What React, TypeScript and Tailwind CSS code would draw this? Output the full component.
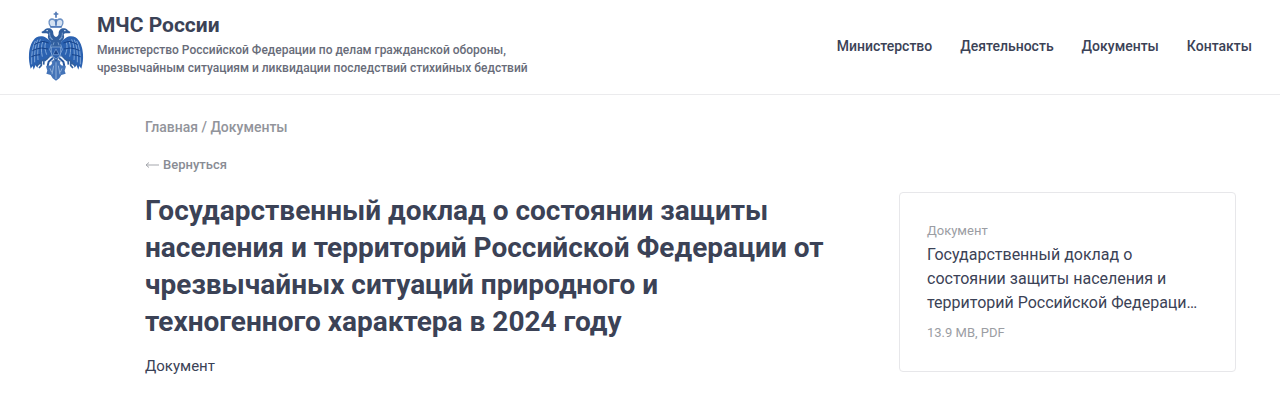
import React from "react";

const navItems = ["Министерство", "Деятельность", "Документы", "Контакты"];

export default function App() {
  return (
    <div className="min-h-screen bg-white font-[Roboto,'Liberation_Sans',sans-serif] text-[#3b4256]">
      <header className="flex items-center justify-between border-b border-[#ebebed] px-7 pt-[11px] pb-[13px]">
        <a href="#" className="flex items-start">
          <Emblem />
          <span className="ml-[13px] block">
            <span className="block text-[21px] leading-7 font-bold">
              МЧС России
            </span>
            <span className="mt-0.5 block text-[12px] leading-[18px] font-medium text-[#686c79]">
              Министерство Российской Федерации по делам гражданской обороны,
              <br />
              чрезвычайным ситуациям и ликвидации последствий стихийных бедствий
            </span>
          </span>
        </a>
        <nav className="flex gap-7 text-[14px] leading-5 font-medium">
          {navItems.map((item) => (
            <a key={item} href="#">
              {item}
            </a>
          ))}
        </nav>
      </header>

      <main className="pt-5 pr-11 pb-8 pl-[145px]">
        <nav className="text-[14px] leading-6 font-medium text-[#92949b]">
          <a href="#">Главная</a> / <a href="#">Документы</a>
        </nav>
        <a
          href="#"
          className="mt-4 inline-flex items-center gap-1 text-[13px] leading-5 font-medium text-[#898c94]"
        >
          <BackArrow />
          Вернуться
        </a>

        <div className="mt-4 flex items-start justify-between gap-12">
          <div className="flex-1">
            <h1 className="text-[28px] leading-[37px] font-bold">
              Государственный доклад о состоянии защиты
              <br />
              населения и территорий Российской Федерации от
              <br />
              чрезвычайных ситуаций природного и
              <br />
              техногенного характера в 2024 году
            </h1>
            <p className="mt-3.5 text-[15px] leading-6">Документ</p>
          </div>

          <a
            href="#"
            className="block w-[337px] shrink-0 rounded border border-[#e7e7ea] px-[27px] pt-7 pb-7"
          >
            <span className="block text-[13px] leading-5 text-[#9b9da3]">
              Документ
            </span>
            <span className="mt-0.5 block text-base leading-6">
              Государственный доклад о
              <br />
              состоянии защиты населения и
              <br />
              территорий Российской Федераци…
            </span>
            <span className="mt-2 block text-[13px] leading-5 text-[#9b9da3]">
              13.9 MB, PDF
            </span>
          </a>
        </div>
      </main>
    </div>
  );
}

const BackArrow = () => (
  <svg width="14" height="8" viewBox="0 0 14 8" fill="none" aria-hidden="true">
    <path d="M14 4H1M4 1.5L1 4l3 2.5" stroke="#a5a7ad" strokeWidth="1" />
  </svg>
);

const Emblem = () => (
  <svg
    width="56"
    height="70"
    viewBox="24 18 168 210"
    fill="none"
    aria-hidden="true"
  >
    {/* cross and crown */}
    <path d="M108 20v18M101 27h14" stroke="#5279b5" strokeWidth="5" />
    <path
      d="M92 65c-8-10-6-22 4-23 6 0 10 4 12 10 2-6 6-10 12-10 10 1 12 13 4 23z"
      fill="#d5e2f2"
      stroke="#6c91c4"
      strokeWidth="4"
    />
    <path d="M108 42v20M91 66h34" stroke="#4c77b8" strokeWidth="5" />
    <HalfEagle />
    <g transform="translate(216 0) scale(-1 1)">
      <HalfEagle />
    </g>
    {/* shield */}
    <path
      d="M94 126h28v16c0 9-6 15-14 20-8-5-14-11-14-20z"
      fill="#2f62ae"
      stroke="#9bbbe2"
      strokeWidth="2"
    />
    <path d="M108 132l9 17H99z" fill="#1d4488" stroke="#83abdc" strokeWidth="2" />
    {/* tail */}
    <path
      d="M100 168h16l7 13 15 3-4 13 3 9-13 4-6 10-10 7-10-7-6-10-13-4 3-9-4-13 15-3z"
      fill="#4474b8"
    />
    <path
      d="M108 172v50M101 182l-5 26M115 182l5 26M90 190l5 12M126 190l-5 12"
      stroke="#b5cdea"
      strokeWidth="2"
    />
  </svg>
);

// one head, wing and leg, mirrored for the right side
const HalfEagle = () => (
  <g>
    <path
      d="M108 96c-5-2-7-5-8-10 0-11-7-17-17-16-5 0-9 3-10 6l-9 5 3 4 12 0c5 0 7 3 5 7-2 6 2 13 8 17l-5 14 7 27 14 19z"
      fill="#315f9f"
    />
    <path
      d="M92 108L78 98C66 90 47 93 41 105c-8 9-13 26-14 43-1 15 1 29 5 43l6-8 3 11 6-14 5 8 5-14 7 6 3-13 10 2 6-9 14-7z"
      fill="#2b62b1"
    />
    <path
      d="M46 108c-9 18-12 41-11 70M53 104c-8 19-10 42-9 68M61 103c-8 19-9 39-7 62M69 107c-6 16-6 31-2 48M77 112c-4 11-2 25 3 37"
      stroke="#8fb3e0"
      strokeWidth="2.5"
    />
    <path
      d="M43 119l12-6 14-4 17 5M37 137l12-5 15-3 20 3M34 155l12-4 14-2"
      stroke="#154188"
      strokeWidth="3"
    />
    <path d="M79 77h5" stroke="#d9e8f8" strokeWidth="3" />
    <path
      d="M89 83c-1 9 3 17 10 21M89 96l8 9M94 118l-5 16 8 16M102 112l-3 9"
      stroke="#9dbce3"
      strokeWidth="2"
    />
    <path
      d="M92 151l-12 12-16 4-8 11-8 4M64 167v14l-7 8M72 166l-1 13"
      stroke="#305f9f"
      strokeWidth="5"
    />
    <path
      d="M99 158l-13 12-3 13M107 164l-11 8"
      stroke="#2858a0"
      strokeWidth="6"
    />
    <path d="M94 151l-10 12M104 164l-8 9" stroke="#adc9eb" strokeWidth="2" />
  </g>
);
